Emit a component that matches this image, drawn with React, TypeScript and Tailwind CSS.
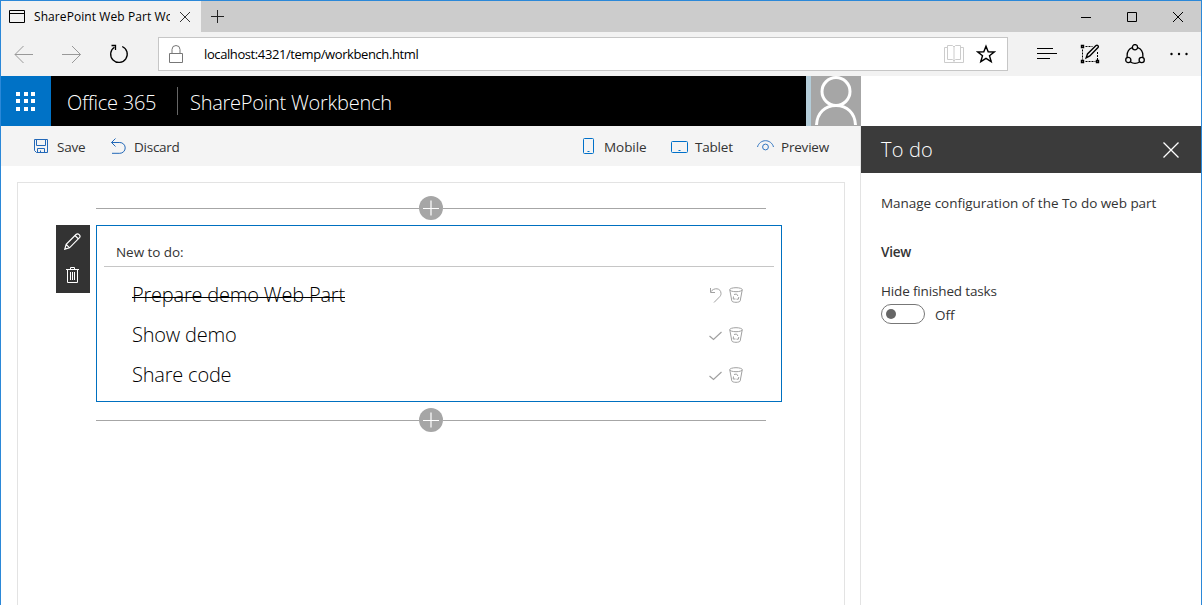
import type { ReactNode } from "react";

function Icon({ w, h, className = "", sw = 1, children }: { w: number; h: number; className?: string; sw?: number; children: ReactNode }) {
  return (
    <svg width={w} height={h} viewBox={`0 0 ${w} ${h}`} fill="none" stroke="currentColor" strokeWidth={sw} className={`block shrink-0 ${className}`}>
      {children}
    </svg>
  );
}

function TabStrip() {
  return (
    <div className="flex h-[31px] bg-[#cccccc]">
      <div className="flex w-[200px] items-center bg-[#f2f2f2] pl-2">
        <Icon w={16} h={13} className="text-black">
          <path d="M.5.5h15v12H.5zM.5 3.500h15" />
        </Icon>
        <span className="ml-[9px] w-[136px] overflow-hidden text-[12px] leading-[18px] tracking-[0.08px] whitespace-nowrap text-black">SharePoint Web Part Workbench</span>
        <Icon w={10} h={10} className="ml-[10px] text-[#333]">
          <path d="M0 0l10 10M10 0L0 10" />
        </Icon>
      </div>
      <Icon w={13} h={13} className="mt-[9px] ml-[10px] text-[#222]">
        <path d="M6.500 0v13M0 6.500h13" />
      </Icon>
      <div className="ml-auto flex items-center pr-[18px] text-black">
        <Icon w={10} h={10}><path d="M0 5.500h10" /></Icon>
        <Icon w={10} h={10} className="ml-[36px]"><path d="M.5.5h9v9h-9z" /></Icon>
        <Icon w={10} h={10} className="ml-[36px]"><path d="M0 0l10 10M10 0L0 10" /></Icon>
      </div>
    </div>
  );
}

function AddressBar() {
  return (
    <div className="flex h-[44px] items-center bg-[#f2f2f2] text-black">
      <Icon w={20} h={18} className="ml-[13px] text-[#999]"><path d="M1 9.500h18M9.500 1L1 9.500 9.500 18" /></Icon>
      <Icon w={20} h={18} className="ml-[28px] text-[#999]"><path d="M0 9.500h18.500M10 1L18.500 9.500 10 18" /></Icon>
      <Icon w={20} h={20} className="ml-[27px]" sw={1.3}>
        <path d="M5.400 3.200A8.300 8.300 0 1 0 13.200 2.500M2.500 1.500h4v4.500" />
      </Icon>
      <div className="ml-[29px] flex h-[34px] w-[850px] items-center border border-[#c6c6c6] bg-white">
        <Icon w={14} h={18} className="ml-[10px] text-[#777]"><path d="M.5 8.500h13v9H.5zM3 8.500V4.500a4 4 0 0 1 8 0v4" /></Icon>
        <span className="ml-[21px] text-[13px] leading-[20px] tracking-[-0.4px] whitespace-nowrap">localhost:4321/temp/workbench.html</span>
        <Icon w={20} h={18} className="ml-auto text-[#ccc]">
          <path d="M10 1.500v16M3.500 14.500V.5h5L10 2 11.500.5h5v14h-5L10 16l-1.500-1.500h-5zM3.500 2.500h-3v15h19v-15h-3" />
        </Icon>
        <Icon w={20} h={20} sw={1.4} className="mr-[11px] ml-[12px]">
          <path d="M10 2.200l2.200 5.600 6 .2-4.700 3.700 1.700 5.900L10 14.300l-5.200 3.300 1.700-5.900L1.800 8l6-.2z" />
        </Icon>
      </div>
      <Icon w={20} h={13} className="mb-[2px] ml-[29px]"><path d="M0 1.500h16M0 6.500h20M0 11.500h13" /></Icon>
      <Icon w={20} h={20} className="ml-[23px]">
        <path d="M1.500 1.500h2v2h-2zM1.500 16.500h2v2h-2zM16.500 16.500h2v2h-2z" strokeWidth="1.400" />
        <path d="M5.500 2.500h7M2.500 5.500v10M5.500 17.500h10M17.500 8v8" strokeDasharray="2 1" />
        <path d="M6.200 13.800l1.300-3.800L16 1.500c1.500-1 3 .7 2 2L9.800 12z" strokeWidth="1.400" />
      </Icon>
      <Icon w={20} h={20} className="ml-[25px]" sw={1.3}>
        <circle cx="10" cy="3.200" r="2.600" /><circle cx="3.300" cy="16" r="2.600" /><circle cx="16.700" cy="16" r="2.600" />
        <path d="M7.300 3.700C3.500 5 1.700 8.500 2.200 13.500M12.700 3.700c3.800 1.300 5.600 4.800 5.100 9.800M5.500 18c2.500 1.700 6.500 1.700 9 0" />
      </Icon>
      <Icon w={18} h={4} className="ml-[25px]">
        <g fill="currentColor" stroke="none"><circle cx="1.500" cy="2" r="1.200" /><circle cx="9" cy="2" r="1.200" /><circle cx="16.500" cy="2" r="1.200" /></g>
      </Icon>
    </div>
  );
}

function SuiteBar() {
  return (
    <div className="flex h-[50px] bg-black text-white">
      <div className="grid w-[50px] place-items-center bg-[#0072c6] pr-[1px]">
        <div className="grid grid-cols-3 gap-[3.500px]">
          {Array.from({ length: 9 }, (_, i) => <i key={i} className="size-[4px] bg-white" />)}
        </div>
      </div>
      <span className="ml-4 w-[110px] text-[20px] leading-[54px] font-light tracking-[-0.25px] whitespace-nowrap">Office 365</span>
      <i className="mt-[11px] h-[28px] w-px bg-[#666]" />
      <span className="ml-[12px] text-[20px] leading-[54px] font-light tracking-[-0.25px] whitespace-nowrap">SharePoint Workbench</span>
      <div className="ml-auto w-[55px] border-l-[5px] border-[#b4cdd9] bg-[#a6a6a6]">
        <Icon w={50} h={50} sw={3}>
          <circle cx="25" cy="15.500" r="14" />
          <path d="M5.500 49C6 37 14 29.500 25 29.500S44 37 44.500 49" />
        </Icon>
      </div>
    </div>
  );
}

function CommandBar() {
  return (
    <div className="flex h-[40px] items-center bg-[#f4f4f4] text-[13.500px] leading-[20px] text-[#333]">
      <Icon w={15} h={15} className="ml-[33px] text-[#2268b8]">
        <path d="M.5.5h13v13H2.500l-2-2zM2.500.5v6h9v-6M3.500 13.500v-4h7v4M6.500 13.500v-2" />
      </Icon>
      <span className="mt-[2px] ml-2 w-[54px] tracking-[-0.25px]">Save</span>
      <Icon w={15} h={16} className="text-[#2268b8]"><path d="M4.500.5l-4 4 4 4M.5 4.500h8.300a5.300 5.300 0 0 1 0 10.800H1" /></Icon>
      <span className="mt-[2px] ml-[8px] tracking-[-0.25px]">Discard</span>
      <div className="ml-auto flex items-center">
        <Icon w={11} h={16} className="text-[#0070c9]"><rect x=".5" y=".5" width="10" height="15" rx="1" /><path d="M4.500 13.500h2" /></Icon>
        <span className="mt-[2px] ml-[10px] w-[67px] tracking-[-0.05px]">Mobile</span>
        <Icon w={17} h={12} className="mt-[2px] text-[#0070c9]"><rect x=".5" y=".5" width="16" height="11" rx="1" /><path d="M7.500 9.500h2" /></Icon>
        <span className="mt-[2px] ml-[7px] w-[62px] tracking-[-0.2px]">Tablet</span>
        <Icon w={17} h={11} className="mb-[2px] text-[#2f74c0]"><path d="M.5 7C1.500 3 5 .7 8.500.7S15.500 3 16.500 7" /><circle cx="8.500" cy="7" r="2.900" /></Icon>
        <span className="mt-[2px] ml-[7px] w-[79px] tracking-[-0.2px]">Preview</span>
      </div>
    </div>
  );
}

function AddZone() {
  return (
    <div className="flex h-[24px] w-[670px] items-center">
      <i className="h-px w-[323px] bg-[#a6a6a6]" />
      <div className="grid size-[24px] place-items-center rounded-full bg-[#a6a6a6] text-white">
        <Icon w={16} h={16}><path d="M8 .5v15M0 8.500h16" strokeWidth="1.200" /></Icon>
      </div>
      <i className="h-px flex-1 bg-[#a6a6a6]" />
    </div>
  );
}

function Task({ title, done = false }: { title: string; done?: boolean }) {
  return (
    <div className="flex h-[40px] items-center pl-[35px] text-black">
      <span className={`relative text-[20px] leading-[30px] font-light ${done ? "tracking-[-0.2px]" : "tracking-[-0.2px]"}`}>
        {title}
        {done && <i className="absolute top-[17px] left-0 h-px w-full bg-black" />}
      </span>
      <div className="mr-[38px] ml-auto flex items-center gap-[7px] text-[#a0a0a0]">
        {done ? (
          <Icon w={13} h={16}><path d="M1.500 1v4.500H6M1.500 5C5 0 12 1 12 6.500c0 1.800-.8 2.700-1.700 3.600L5 15.500" /></Icon>
        ) : (
          <Icon w={13} h={10} className="mt-[1px]"><path d="M.5 5L4.500 8.500 12.500 1" strokeWidth="1.200" /></Icon>
        )}
        <Icon w={14} h={16}>
          <ellipse cx="7" cy="2.700" rx="6.300" ry="2" />
          <path d="M.8 3l2 10.800c.3 2 8.100 2 8.400 0l2-10.800" />
          <path d="M5 7.500l2.500-.5 1.500 2M4.500 9.500L4.200 12h2.300M9.800 10l-.5 2.200H7.500" />
        </Icon>
      </div>
    </div>
  );
}

function Canvas() {
  return (
    <div className="mt-4 mr-[15px] ml-4 flex-1 border border-b-0 border-[#e3e3e3] pt-[13px] pl-[38px]">
      <div className="pl-[40px]"><AddZone /></div>
      <div className="mt-[5px] flex">
        <div className="flex h-[68px] w-[34px] flex-col items-center bg-[#333] pt-[8px] text-white">
          <Icon w={17} h={17} className="mr-[1px]" sw={1.2}>
            <path d="M.8 16.200l1.400-4.900L12 1.500c2-2 5.200 1.300 3.500 3.200L5.500 14.800zM2.200 11.300l3.300 3.500M11 2.500L14.500 6" />
          </Icon>
          <Icon w={13} h={16} className="mt-[17px] mr-[1px]">
            <path d="M0 2.500h13M4.500 2.500v-2h4v2M1.500 2.500v13h10v-13M4.500 5v8M6.500 5v8M8.500 5v8" />
          </Icon>
        </div>
        <div className="ml-[6px] h-[177px] w-[686px] border border-[#0070c0] px-[7px] pt-[15px]">
          <div className="h-[26px] border-b border-[#c6c6c6] pl-[12px] text-[13.500px] leading-[22px] tracking-[-0.05px] text-[#333]">New to do:</div>
          <div className="-mr-[7px] -ml-[7px] pt-[8px]">
            <Task title="Prepare demo Web Part" done />
            <Task title="Show demo" />
            <Task title="Share code" />
          </div>
        </div>
      </div>
      <div className="mt-[6px] pl-[40px]"><AddZone /></div>
    </div>
  );
}

function PropertyPane() {
  return (
    <div className="flex w-[340px] flex-col pt-[50px] text-[13.500px] leading-[20px] text-[#333]">
      <div className="flex h-[47px] items-center bg-[#3b3b3b] pr-[22px] pl-5 text-white">
        <span className="text-[20px] leading-[30px] font-light tracking-[0.2px]">To do</span>
        <Icon w={16} h={16} className="ml-auto" sw={1.3}><path d="M.5.5l15 15M15.500.5l-15 15" /></Icon>
      </div>
      <div className="flex flex-1 flex-col pt-[20px] pl-[20px]">
        <span className="tracking-[-0.03px] whitespace-nowrap">Manage configuration of the To do web part</span>
        <span className="mt-[29px] font-semibold tracking-[-0.2px]">View</span>
        <span className="mt-[19px] tracking-[-0.15px]">Hide finished tasks</span>
        <div className="mt-[2px] flex items-center">
          <div className="flex h-[20px] w-[44px] items-center rounded-full border border-[#777] pl-[4px]"><i className="size-[10px] rounded-full bg-[#666]" /></div>
          <span className="mt-[2px] ml-[10px]">Off</span>
        </div>
      </div>
    </div>
  );
}

export default function App() {
  return (
    <div className="flex h-[605px] w-[1202px] flex-col overflow-hidden border-x border-t border-[#2b88d8] bg-white font-['Open_Sans','Noto_Sans',sans-serif]">
      <TabStrip />
      <AddressBar />
      <div className="flex flex-1">
        <div className="flex w-[860px] flex-col">
          <SuiteBar />
          <div className="flex flex-1 flex-col border-r border-[#e3e3e3]">
            <CommandBar />
            <Canvas />
          </div>
        </div>
        <PropertyPane />
      </div>
    </div>
  );
}
